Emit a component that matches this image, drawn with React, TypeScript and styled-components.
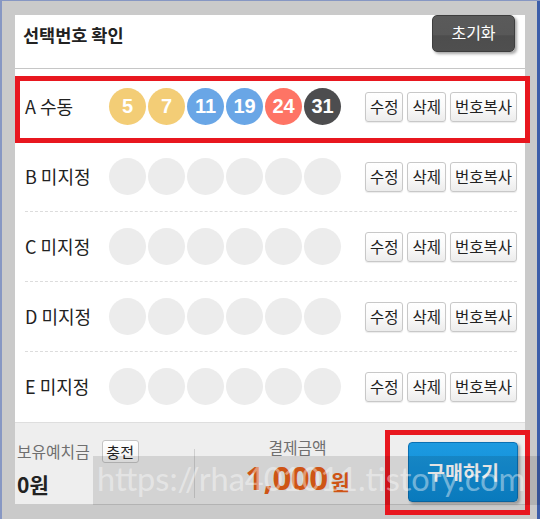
import React from "react";
import styled, { createGlobalStyle } from "styled-components";

const Global = createGlobalStyle`
  html, body { margin: 0; padding: 0; background: #cacaca; }
  body { font-family: "Noto Sans CJK KR", "Noto Sans", sans-serif; }
  * { box-sizing: border-box; }
`;

const Frame = styled.div`
  position: relative;
  width: 540px;
  height: 519px;
  overflow: hidden;
  background: #cacaca;
  padding: 15px 0 0 15px;
  box-shadow: inset 2px 1px 0 #8797c3, inset -3px 0 0 #3d5ea9;
`;

const Panel = styled.div`
  width: 510px;
  background: #fff;
  display: flex;
  flex-direction: column;
`;

const Header = styled.div`
  height: 54px;
  border-bottom: 1px solid #c6c6c6;
  display: flex;
  justify-content: space-between;
  align-items: flex-start;
  padding: 0 10px 0 8px;
  margin-bottom: 3px;
`;

const Title = styled.h2`
  margin: 8px 0 0;
  font-size: 17.5px;
  font-weight: 700;
  line-height: 24px;
  color: #222;
`;

const ResetButton = styled.button`
  width: 83px;
  height: 37px;
  border: 1px solid #3e3e3e;
  border-radius: 5px;
  background: linear-gradient(#5a5a5a 0%, #585858 55%, #4d4d4d 56%, #4f4f4f 100%);
  color: #fff;
  font-family: inherit;
  font-size: 16px;
  box-shadow: 2px 2px 3px rgba(0, 0, 0, 0.35);
  padding: 0 0 3px;
`;

const Row = styled.div<{ $last?: boolean }>`
  height: 70px;
  margin: 0 8px 0 10px;
  display: flex;
  align-items: center;
  border-bottom: ${(p) => (p.$last ? "1px solid transparent" : "1px dashed #dcdcdc")};
`;

const Label = styled.div`
  width: 84px;
  font-size: 18px;
  color: #222;
  padding-bottom: 1px;
`;

const Balls = styled.div`
  display: flex;
  gap: 2px;
  flex: 1;
`;

const Ball = styled.div<{ $bg: string }>`
  width: 37px;
  height: 37px;
  border-radius: 50%;
  background: ${(p) => p.$bg};
  color: #fff;
  font-family: "Liberation Sans", Arial, sans-serif;
  font-weight: 700;
  font-size: 20px;
  display: flex;
  align-items: center;
  justify-content: center;
`;

const Actions = styled.div`
  display: flex;
  gap: 4px;
`;

const SmallButton = styled.button`
  height: 30px;
  padding: 0 4px 2px;
  border: 1px solid #c8c8c8;
  border-radius: 3px;
  background: linear-gradient(#ffffff 0%, #fafafa 50%, #ececec 100%);
  color: #222;
  font-family: inherit;
  font-size: 15.5px;
  box-shadow: 0 1px 1px rgba(0, 0, 0, 0.08);
`;

const Footer = styled.div`
  height: 82px;
  border-top: 1px solid #dedede;
  background: #eeeeee;
  display: flex;
`;

const Wallet = styled.div`
  width: 179px;
  padding: 17px 0 0 2px;
  display: flex;
  flex-direction: column;
  gap: 7px;
`;

const WalletTop = styled.div`
  display: flex;
  align-items: center;
  gap: 12px;
`;

const FootLabel = styled.span`
  font-size: 15.8px;
  color: #6f6f6f;
`;

const ChargeButton = styled.button`
  width: 37px;
  height: 23px;
  padding: 0 0 1px;
  border: 1px solid #c4c4c4;
  border-radius: 3px;
  background: linear-gradient(#fff, #f3f3f3);
  font-family: inherit;
  font-size: 15px;
  color: #222;
`;

const Balance = styled.div`
  font-size: 21px;
  font-weight: 700;
  color: #222;
  line-height: 28px;
`;

const Payment = styled.div`
  flex: 1;
  border-left: 1px solid #cfcfcf;
  margin: 28px 0 4px;
  display: flex;
  flex-direction: column;
  align-items: center;
  position: relative;
  top: -2px;
`;

const PayLabel = styled(FootLabel)`
  margin-top: -13px;
`;

const Amount = styled.div`
  color: #e85f18;
  font-weight: 700;
  display: flex;
  align-items: baseline;
  line-height: 1;
  margin-top: 2px;
`;

const AmountNum = styled.span`
  font-family: "Noto Sans", "Noto Sans CJK KR", sans-serif;
  font-size: 33px;
  letter-spacing: -0.5px;
`;

const AmountUnit = styled.span`
  font-size: 21px;
  margin-left: 3px;
`;

const BuyButton = styled.button`
  width: 110px;
  height: 60px;
  margin: 19px 7px 0 8px;
  border: 1px solid #0a70b3;
  border-radius: 4px;
  background: linear-gradient(#1d9ae0 0%, #0b8ad5 100%);
  color: #fff;
  font-family: inherit;
  font-size: 19.5px;
  font-weight: 700;
  box-shadow: 2px 2px 3px rgba(0, 0, 0, 0.3);
  padding: 0 0 2px;
`;

const Annotation = styled.div<{ $x: number; $y: number; $w: number; $h: number }>`
  position: absolute;
  left: ${(p) => p.$x}px;
  top: ${(p) => p.$y}px;
  width: ${(p) => p.$w}px;
  height: ${(p) => p.$h}px;
  border: 5px solid #e8171f;
  pointer-events: none;
`;

const Watermark = styled.div`
  position: absolute;
  left: 93px;
  top: 456px;
  width: 447px;
  height: 49px;
  background: rgba(0, 0, 0, 0.11);
  color: rgba(255, 255, 255, 0.42);
  font-family: Lato, "Noto Sans", sans-serif;
  font-size: 32.5px;
  line-height: 46px;
  padding-left: 4px;
  white-space: nowrap;
  pointer-events: none;
`;

type Pick = { label: string; nums: number[] };

const rows: Pick[] = [
  { label: "A 수동", nums: [5, 7, 11, 19, 24, 31] },
  { label: "B 미지정", nums: [] },
  { label: "C 미지정", nums: [] },
  { label: "D 미지정", nums: [] },
  { label: "E 미지정", nums: [] },
];

const ballColor = (n: number) => {
  if (n <= 10) return "#f3cd76";
  if (n <= 20) return "#69a6e6";
  if (n <= 30) return "#fe7465";
  if (n <= 40) return "#4d4d4f";
  return "#b0d840";
};

export default function App() {
  return (
    <>
      <Global />
      <Frame>
        <Panel>
          <Header>
            <Title>선택번호 확인</Title>
            <ResetButton>초기화</ResetButton>
          </Header>
          {rows.map((r, i) => (
            <Row key={r.label} $last={i === rows.length - 1}>
              <Label>{r.label}</Label>
              <Balls>
                {Array.from({ length: 6 }).map((_, j) => {
                  const n = r.nums[j];
                  return (
                    <Ball key={j} $bg={n ? ballColor(n) : "#ececec"}>
                      {n ?? ""}
                    </Ball>
                  );
                })}
              </Balls>
              <Actions>
                <SmallButton>수정</SmallButton>
                <SmallButton>삭제</SmallButton>
                <SmallButton>번호복사</SmallButton>
              </Actions>
            </Row>
          ))}
          <Footer>
            <Wallet>
              <WalletTop>
                <FootLabel>보유예치금</FootLabel>
                <ChargeButton>충전</ChargeButton>
              </WalletTop>
              <Balance>0원</Balance>
            </Wallet>
            <Payment>
              <PayLabel>결제금액</PayLabel>
              <Amount>
                <AmountNum>1,000</AmountNum>
                <AmountUnit>원</AmountUnit>
              </Amount>
            </Payment>
            <BuyButton>구매하기</BuyButton>
          </Footer>
        </Panel>
        <Annotation $x={15} $y={76} $w={515} $h={67} />
        <Annotation $x={385} $y={430} $w={145} $h={85} />
        <Watermark>https://rha401011.tistory.com</Watermark>
      </Frame>
    </>
  );
}
